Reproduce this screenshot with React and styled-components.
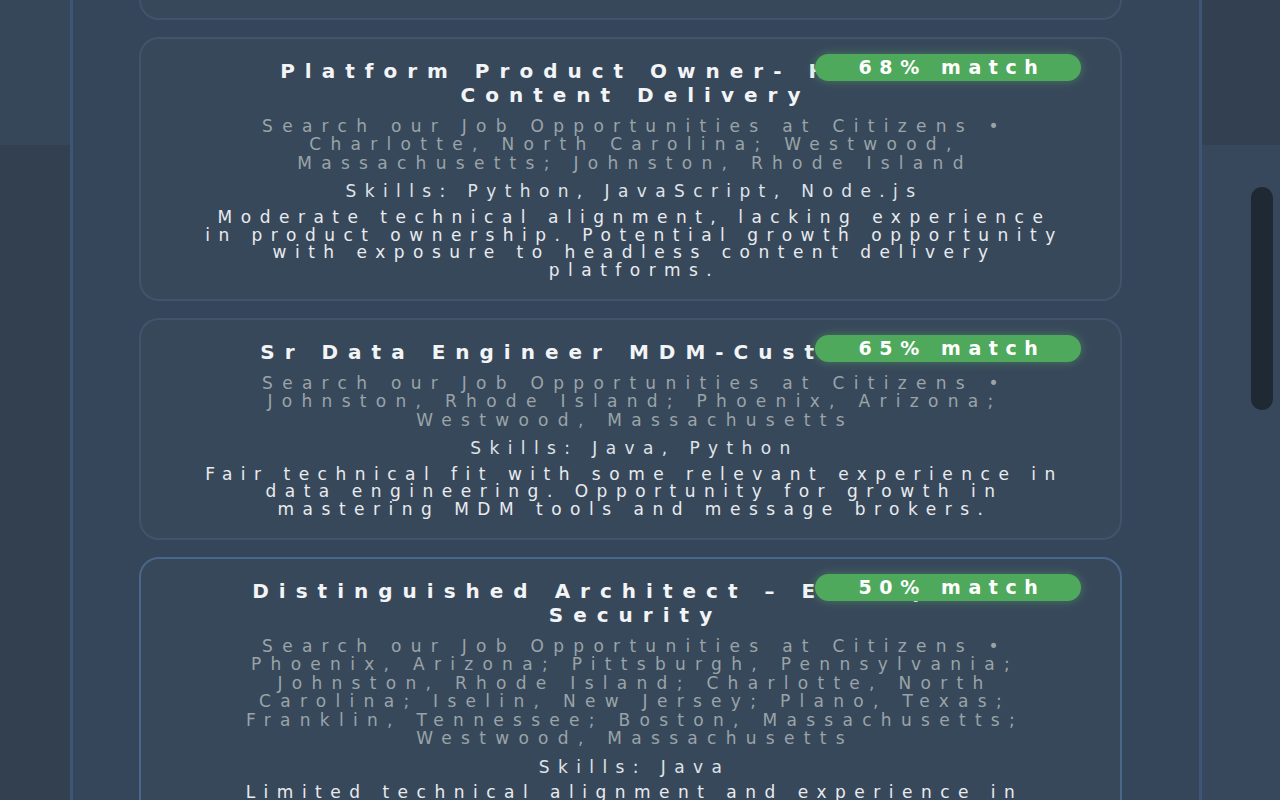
import React, { useLayoutEffect, useRef } from 'react';
import styled, { createGlobalStyle } from 'styled-components';

const GlobalStyle = createGlobalStyle`
  html, body {
    margin: 0;
    padding: 0;
    height: 100%;
    overflow: hidden;
    background: #36465a;
    font-family: "DejaVu Sans", "Liberation Sans", sans-serif;
  }
  #root {
    height: 100%;
  }
`;

const Page = styled.div`
  display: grid;
  grid-template-columns: 70px 1132px 78px;
  height: 100vh;
`;

const SideColumn = styled.div`
  display: flex;
  flex-direction: column;
  background: ${p => p.$bottom};
`;

const SideTop = styled.div`
  height: 145px;
  flex-shrink: 0;
  background: ${p => p.$color};
`;

const ScrollThumb = styled.div`
  margin: 42px 0 0 49px;
  width: 22px;
  height: 223px;
  border-radius: 11px;
  background: #1f2934;
`;

const Panel = styled.main`
  border-left: 3px solid #3d5676;
  border-right: 3px solid #3d5676;
  background: #36465a;
  overflow: hidden;
  height: 100vh;
  box-sizing: border-box;
`;

const Scroller = styled.div`
  position: relative;
  height: 100%;
  overflow: hidden;
  padding: 20px 77px 40px 66px;
  box-sizing: border-box;
  display: flex;
  flex-direction: column;
  gap: 17px;
`;

const Card = styled.article`
  position: relative;
  flex-shrink: 0;
  border-radius: 20px;
  border: 2px solid ${p => (p.$active ? '#4a6689' : 'rgba(120, 150, 190, 0.16)')};
  background: rgba(255, 255, 255, 0.012);
  padding: 20px 54px 19px;
  display: flex;
  flex-direction: column;
  align-items: center;
  text-align: center;
`;

const Badge = styled.span`
  position: absolute;
  top: 15px;
  right: 39px;
  width: 266px;
  height: 27px;
  border-radius: 14px;
  background: #4fa95d;
  box-shadow: 0 0 10px rgba(90, 190, 100, 0.45);
  color: #ffffff;
  font-weight: 700;
  font-size: 19px;
  letter-spacing: 7.6px;
  line-height: 27px;
  text-align: center;
  padding-left: 8px;
  box-sizing: border-box;
`;

const Title = styled.h3`
  margin: 0;
  color: #f2f4f6;
  font-size: 20px;
  font-weight: 700;
  letter-spacing: 10px;
  line-height: 24px;
  padding-left: 10px;
`;

const Location = styled.p`
  margin: 10px 0 0;
  color: #9aa4a8;
  font-size: 17px;
  letter-spacing: 9.3px;
  line-height: 18.5px;
  padding-left: 9px;
`;

const Skills = styled.p`
  margin: 10px 0 0;
  color: #dfe3e8;
  font-size: 17px;
  letter-spacing: 8.4px;
  line-height: 18.5px;
  padding-left: 8px;
`;

const Summary = styled.p`
  margin: 8px 0 0;
  color: #e8ebee;
  font-size: 17px;
  letter-spacing: 8.5px;
  line-height: 17.7px;
  padding-left: 8px;
`;

const jobs = [
  {
    title: 'Software Engineer III - Digital Banking',
    match: 72,
    location: 'Search our Job Opportunities at Citizens • Johnston, Rhode Island',
    skills: 'Python, JavaScript, React',
    summary: 'Solid technical alignment with modern web stacks and cloud services.',
  },
  {
    title: 'Platform Product Owner- Headless Content Delivery',
    match: 68,
    location:
      'Search our Job Opportunities at Citizens • Charlotte, North Carolina; Westwood, Massachusetts; Johnston, Rhode Island',
    skills: 'Python, JavaScript, Node.js',
    summary:
      'Moderate technical alignment, lacking experience in product ownership. Potential growth opportunity with exposure to headless content delivery platforms.',
  },
  {
    title: 'Sr Data Engineer MDM-Customer 360',
    match: 65,
    location:
      'Search our Job Opportunities at Citizens • Johnston, Rhode Island; Phoenix, Arizona; Westwood, Massachusetts',
    skills: 'Java, Python',
    summary:
      'Fair technical fit with some relevant experience in data engineering. Opportunity for growth in mastering MDM tools and message brokers.',
  },
  {
    title: 'Distinguished Architect – Enterprise Security',
    match: 50,
    location:
      'Search our Job Opportunities at Citizens • Phoenix, Arizona; Pittsburgh, Pennsylvania; Johnston, Rhode Island; Charlotte, North Carolina; Iselin, New Jersey; Plano, Texas; Franklin, Tennessee; Boston, Massachusetts; Westwood, Massachusetts',
    skills: 'Java',
    summary:
      'Limited technical alignment and experience in enterprise security architecture. Significant growth needed in identity and cloud security.',
    active: true,
  },
];

const JobCard = React.forwardRef(({ job }, ref) => (
  <Card ref={ref} $active={job.active}>
    <Title>{job.title}</Title>
    <Location>{job.location}</Location>
    <Skills>Skills: {job.skills}</Skills>
    <Summary>{job.summary}</Summary>
    <Badge>{job.match}% match</Badge>
  </Card>
));

const App = () => {
  const scrollerRef = useRef(null);
  const firstRef = useRef(null);

  // the list is shown scrolled, with only the bottom edge of the first card left in view
  useLayoutEffect(() => {
    const el = scrollerRef.current;
    const first = firstRef.current;
    if (el && first) {
      el.scrollTop = first.offsetTop + first.offsetHeight - 20;
    }
  }, []);

  return (
    <>
      <GlobalStyle />
      <Page>
        <SideColumn $bottom="#334050">
          <SideTop $color="#37475a" />
        </SideColumn>
        <Panel>
          <Scroller ref={scrollerRef}>
            {jobs.map((job, i) => (
              <JobCard key={job.title} job={job} ref={i === 0 ? firstRef : null} />
            ))}
          </Scroller>
        </Panel>
        <SideColumn $bottom="#38485c">
          <SideTop $color="#334051" />
          <ScrollThumb />
        </SideColumn>
      </Page>
    </>
  );
};

export default App;
